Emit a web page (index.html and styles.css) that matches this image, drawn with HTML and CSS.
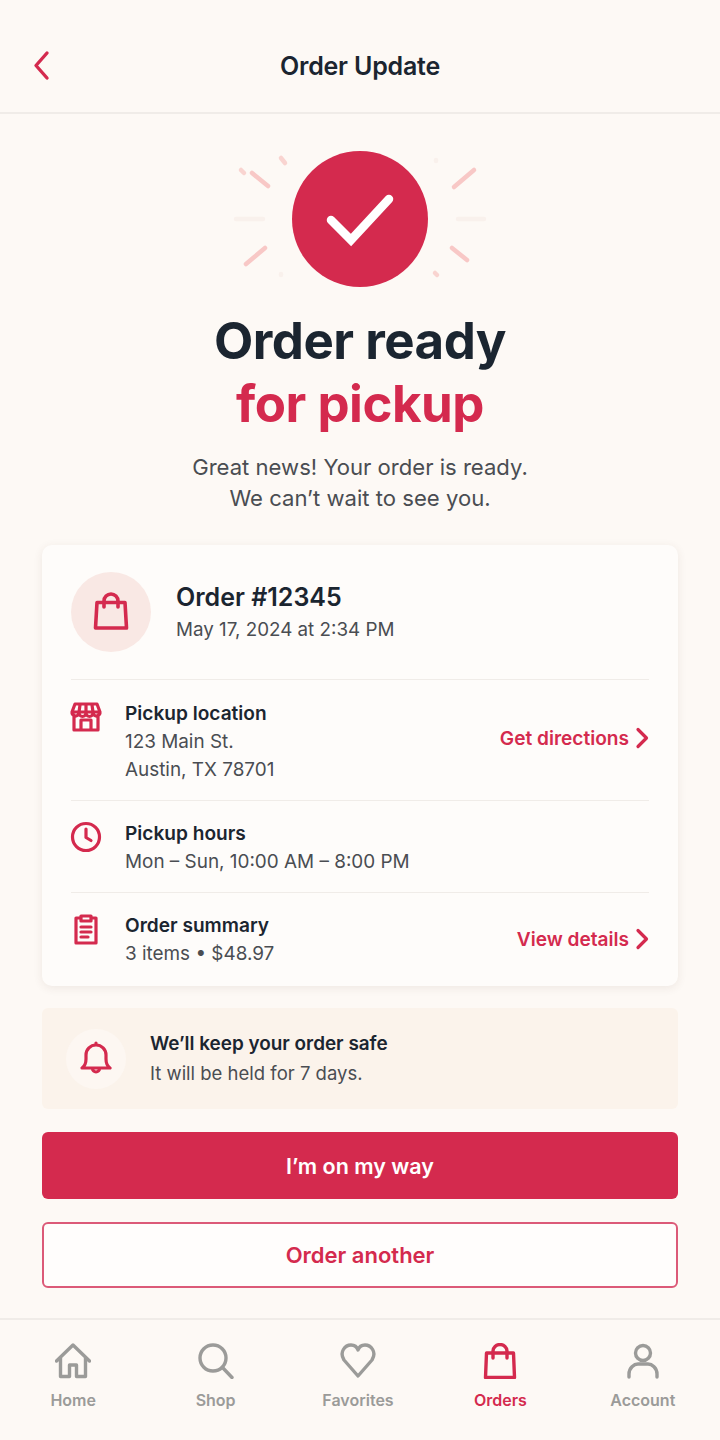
FILE: index.html
```html
<!DOCTYPE html>
<html lang="en">
<head>
	<meta charset="UTF-8" />
	<meta name="viewport" content="width=device-width, initial-scale=1.0" />
	<title>Order Update</title>
	<link rel="stylesheet" href="styles.css">
</head>
<body>
	<header class="topbar">
		<svg class="back" viewBox="0 0 20 32" role="img"><path d="M15 4 4 16.500 15 29"/></svg>
		<h2>Order Update</h2>
	</header>

	<main>
		<section class="hero">
			<svg class="burst" viewBox="230 145 260 145" role="img">
				<g class="ray ray-mid">
					<path d="M252 173 268 186"/>
					<path d="M474 170 454 187"/>
					<path d="M265 248 246 264"/>
					<path d="M452 248 467 260"/>
				</g>
				<g class="ray ray-low">
					<path d="M236 219H263"/>
					<path d="M458 219H484"/>
					<path d="M436 160v1"/>
					<path d="M281 274v1"/>
				</g>
				<g class="ray ray-dot">
					<path d="M281 158 285 163"/>
					<path d="M241 170 244 173"/>
					<path d="M435 273 437 275"/>
				</g>
				<circle cx="360" cy="219" r="68" fill="#d42a4e"/>
				<path class="tick" d="M331 220 351 240 389 199"/>
			</svg>
			<h1>Order ready<span>for pickup</span></h1>
			<p>Great news! Your order is ready.<br>We can’t wait to see you.</p>
		</section>

		<section class="card">
			<div class="order-head">
				<div class="avatar">
					<svg class="icon" viewBox="0 0 36 40"><path d="M4 11.500h28l1.500 25.500h-31zM11 16v-6a7 7 0 0 1 14 0v6"/></svg>
				</div>
				<div>
					<h3>Order #12345</h3>
					<p class="date">May 17, 2024 at 2:34 PM</p>
				</div>
			</div>

			<div class="row">
				<svg class="icon row-icon" viewBox="0 0 32 32"><path d="M5 3h22l3 8a3.500 3.500 0 0 1-7 1 3.500 3.500 0 0 1-7 0 3.500 3.500 0 0 1-7 0 3.500 3.500 0 0 1-7-1zM4 14v15h24V14M11 29V19h10v10M2 11h28M10 4l-1 7M16 4v7M22 4l1 7"/></svg>
				<div class="row-text">
					<h4>Pickup location</h4>
					<p>123 Main St.<br>Austin, TX 78701</p>
				</div>
				<a class="link">Get directions <svg viewBox="0 0 14 22"><path d="M3 2.500 11.500 11 3 19.500"/></svg></a>
			</div>

			<div class="row">
				<svg class="icon row-icon" viewBox="0 0 32 32"><circle cx="16" cy="16" r="13.500"/><path d="M16 8v8.500l5 3"/></svg>
				<div class="row-text">
					<h4>Pickup hours</h4>
					<p>Mon – Sun, 10:00 AM – 8:00 PM</p>
				</div>
			</div>

			<div class="row">
				<svg class="icon row-icon" viewBox="0 0 32 32"><path d="M10 5H6v25h20V5h-4M11 3h10v5H11zM11 14h10M11 19h10M11 24h7"/></svg>
				<div class="row-text">
					<h4>Order summary</h4>
					<p>3 items • $48.97</p>
				</div>
				<a class="link">View details <svg viewBox="0 0 14 22"><path d="M3 2.500 11.500 11 3 19.500"/></svg></a>
			</div>
		</section>

		<section class="notice">
			<div class="notice-icon">
				<svg class="icon" viewBox="0 0 32 36"><path d="M2 27c3-2 4-5 4-9v-4a10 10 0 0 1 20 0v4c0 4 1 7 4 9zM16 4V2M12.500 27.500a3.500 3.500 0 0 0 7 0"/></svg>
			</div>
			<div class="row-text">
				<h4>We’ll keep your order safe</h4>
				<p>It will be held for 7 days.</p>
			</div>
		</section>

		<button class="btn btn-primary">I’m on my way</button>
		<button class="btn btn-outline">Order another</button>
	</main>

	<nav class="tabs">
		<a class="tab">
			<svg viewBox="0 0 36 36"><path d="M1.500 18 18 2l16.500 16M5.500 15v18.500h9V22h7v11.500h9V15"/></svg>
			Home
		</a>
		<a class="tab">
			<svg viewBox="0 0 36 36"><circle cx="15" cy="15" r="13"/><path d="M24.500 24.500 34 34.500"/></svg>
			Shop
		</a>
		<a class="tab">
			<svg viewBox="0 0 36 36"><path d="M18 33 4 17C-1 9 5 2 11 2c3 0 6 2 7 5 1-3 4-5 7-5 6 0 12 7 7 15z"/></svg>
			Favorites
		</a>
		<a class="tab active">
			<svg viewBox="0 0 36 36"><path d="M4.500 10h27l1 24.500h-29zM11 15V8a7 6.500 0 0 1 14 0v7"/></svg>
			Orders
		</a>
		<a class="tab">
			<svg viewBox="0 0 36 36"><circle cx="18" cy="10" r="7.500"/><path d="M4 34v-3c0-6 5-10 9-10h10c4 0 9 4 9 10v3"/></svg>
			Account
		</a>
	</nav>
</body>
</html>
```

FILE: styles.css
```css
:root {
	--bg: #fdf9f5;
	--ink: #1b2530;
	--text-2: #4a4d52;
	--red: #d42a4e;
	--line: #f0ece8;
	--muted: #9b9b99;
}

*,
*:after,
*:before {
	box-sizing: border-box;
}

body {
	margin: 0;
	height: 1440px;
	display: flex;
	flex-direction: column;
	background: var(--bg);
	color: var(--ink);
	font-family: Inter, "Noto Sans", sans-serif;
	overflow: hidden;
}

h1,
h2,
h3,
h4,
p {
	margin: 0;
}

svg {
	fill: none;
	stroke-linecap: round;
	stroke-linejoin: round;
}

.topbar {
	height: 114px;
	flex: none;
	display: flex;
	align-items: center;
	justify-content: center;
	position: relative;
	padding-top: 20px;
	border-bottom: 2px solid var(--line);
}

.topbar h2 {
	font-size: 25px;
	line-height: 32px;
	font-weight: 600;
	letter-spacing: -0.2px;
}

.back {
	position: absolute;
	left: 32px;
	top: 49px;
	width: 20px;
	height: 32px;
	stroke: var(--red);
	stroke-width: 3.400;
}

main {
	flex: 1;
	padding: 0 42px;
	display: flex;
	flex-direction: column;
}

.hero {
	text-align: center;
	padding-top: 31px;
}

.burst {
	display: block;
	width: 260px;
	height: 145px;
	margin: 0 auto;
}

.ray {
	stroke-width: 4.500;
}

.ray-mid {
	stroke: #f8c8c6;
}

.ray-low {
	stroke: #f9f1ec;
}

.ray-dot {
	stroke: #f9d4d0;
}

.tick {
	stroke: #fff;
	stroke-width: 8.500;
	stroke-linejoin: miter;
}

.hero h1 {
	margin-top: 19px;
	font-size: 51px;
	line-height: 63px;
	font-weight: 700;
	letter-spacing: -0.5px;
}

.hero h1 span {
	display: block;
	color: var(--red);
}

.hero p {
	margin-top: 17px;
	font-size: 22.100px;
	line-height: 31px;
	color: var(--text-2);
}

.card {
	margin-top: 31px;
	height: 441px;
	padding: 0 29px;
	background: #fefcfa;
	border-radius: 10px;
	box-shadow: 0 2px 10px rgba(90, 60, 40, 0.09);
}

.icon {
	stroke: var(--red);
	stroke-width: 3.200;
}

.order-head {
	height: 134px;
	display: flex;
	align-items: center;
	gap: 25px;
	padding-bottom: 1px;
}

.avatar {
	width: 80px;
	height: 80px;
	border-radius: 50%;
	background: #f9e8e4;
	display: flex;
	align-items: center;
	justify-content: center;
}

.avatar .icon {
	width: 36px;
	height: 40px;
	margin-top: -2px;
	stroke-width: 3.600;
}

.order-head h3 {
	font-size: 25px;
	line-height: 34px;
	font-weight: 600;
}

.date {
	font-size: 18.800px;
	line-height: 28px;
	margin-top: 2px;
	color: var(--text-2);
}

.row {
	display: flex;
	align-items: center;
	padding: 18px 0 16px;
	border-top: 1px solid var(--line);
}

.order-head + .row {
	padding-top: 19px;
}

.row-icon {
	width: 32px;
	height: 32px;
	margin: 2px 23px 0 -1px;
	align-self: flex-start;
}

.row-text {
	flex: 1;
}

.row-text h4 {
	font-size: 19.100px;
	line-height: 28px;
	font-weight: 600;
}

.row-text p {
	padding-top: 1px;
	font-size: 18.900px;
	line-height: 28px;
	color: var(--text-2);
}

.link {
	display: flex;
	align-items: center;
	gap: 6px;
	margin-bottom: 8px;
	font-size: 19.100px;
	font-weight: 600;
	color: var(--red);
}

.row:last-child .link {
	margin-bottom: 2px;
}

.link svg {
	width: 14px;
	height: 22px;
	stroke: var(--red);
	stroke-width: 3.200;
}

.notice {
	margin-top: 22px;
	height: 101px;
	padding: 0 24px;
	display: flex;
	align-items: center;
	gap: 24px;
	border-radius: 6px;
	background: #fbf3eb;
}

.notice-icon {
	width: 60px;
	height: 60px;
	flex: none;
	border-radius: 50%;
	background: #fdf7f2;
	display: flex;
	align-items: center;
	justify-content: center;
}

.notice-icon .icon {
	width: 32px;
	height: 36px;
}

.notice .row-text h4 {
	font-size: 18.900px;
}

.notice .row-text p {
	font-size: 18.500px;
}

.btn {
	display: block;
	width: 100%;
	font: 600 22px Inter, "Noto Sans", sans-serif;
	border-radius: 6px;
	padding: 0;
}

.btn-primary {
	margin-top: 23px;
	height: 67px;
	font-size: 21.500px;
	background: var(--red);
	color: #fff;
	border: 0;
}

.btn-outline {
	margin-top: 23px;
	height: 66px;
	background: #fffdfc;
	color: var(--red);
	border: 2px solid #dc5a78;
}

.tabs {
	height: 122px;
	flex: none;
	padding: 23px 6px 0 2px;
	display: grid;
	grid-template-columns: repeat(5, 1fr);
	border-top: 2px solid var(--line);
}

.tab {
	display: flex;
	flex-direction: column;
	align-items: center;
	gap: 11px;
	font-size: 16px;
	line-height: 20px;
	font-weight: 600;
	color: var(--muted);
}

.tab svg {
	width: 36px;
	height: 36px;
	stroke: var(--muted);
	stroke-width: 3.400;
}

.tab.active {
	color: var(--red);
}

.tab.active svg {
	stroke: var(--red);
}
```
